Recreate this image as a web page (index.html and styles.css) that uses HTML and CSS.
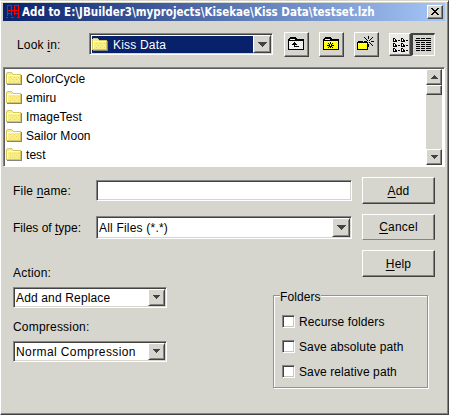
FILE: index.html
```
<!DOCTYPE html>
<html lang="en">
<head>
<meta charset="utf-8">
<title>Add to archive</title>
<link rel="stylesheet" href="styles.css">
</head>
<body>
<svg width="0" height="0" class="defs" aria-hidden="true">
  <defs>
    <symbol id="folder" viewBox="0 0 16 13">
      <path d="M0 2V1h1V0h5v1h1v1h8v10H0z" fill="#d6c663"/>
      <path d="M1 1h5v1h1v1h7v8H1z" fill="#f7ef84"/>
      <path d="M4 5h1v1H4zM8 5h1v1H8zM12 5h1v1h-1zM6 7h1v1H6zM10 7h1v1h-1zM4 9h1v1H4zM8 9h1v1H8zM12 9h1v1h-1z" fill="#efd66b"/>
      <path d="M1 3h13v1H2v7H1z" fill="#fffff0"/>
      <path d="M15 3h1v10H1v-1h14z" fill="#84847b"/>
    </symbol>
    <symbol id="tool-folder" viewBox="0 0 16 14">
      <path d="M0 13V2h1V1h1V0h6v1h1v1h7v11z"/>
      <path d="M1 4h14v8H1zM2 2h5v1H2z" fill="#ff0"/>
      <path d="M1 4.500h14M2 5.500h13M1 6.500h14M2 7.500h13M1 8.500h14M2 9.500h13M1 10.500h14M2 11.500h13M3 2.500h4" stroke="#fff" stroke-dasharray="1 1"/>
    </symbol>
    <symbol id="down" viewBox="0 0 9 5"><path d="M0 0h9v1h-1v1h-1v1h-1v1h-1v1h-1v-1h-1v-1h-1v-1h-1v-1h-1z" fill="#424242"/></symbol>
    <symbol id="down-small" viewBox="0 0 7 4"><path d="M0 0h7v1H6v1H5v1H4v1H3V3H2V2H1V1H0z" fill="#424242"/></symbol>
  </defs>
</svg>
<main class="window">
  <header class="titlebar">
    <svg class="app-icon" width="14" height="14" viewBox="0 0 14 14"><path d="M1.500 11V.5h4v5h-4M5.500 5.500h7M8.500 10V.5h4v11M1 8.500h4M5.500 6v5M8 8.500h4M0 12.500h2M5 12.500h3M11 12.500h3" fill="none" stroke="#f00"/></svg>
    <h1>Add to E:\JBuilder3\myprojects\Kisekae\Kiss Data\testset.lzh</h1>
    <button class="close" aria-label="Close"><svg width="8" height="7" viewBox="0 0 8 7"><path d="M0 0h2v1h1v1h2v-1h1v-1h2v1h-1v1h-1v1h-1v1h1v1h1v1h1v1h-2v-1h-1v-1h-2v1h-1v1h-2v-1h1v-1h1v-1h1v-1h-1v-1h-1v-1h-1z"/></svg></button>
  </header>

  <section class="lookbar">
    <span class="look-label">Look <u>i</u>n:</span>
    <div class="combo look">
      <div class="value selected"><svg class="folder" width="16" height="13"><use href="#folder"/></svg><span>Kiss Data</span></div>
      <button class="drop" aria-label="Open"><svg width="9" height="5"><use href="#down"/></svg></button>
    </div>
    <div class="tools">
      <button class="tool" aria-label="Up one level"><svg width="16" height="14" viewBox="0 0 16 14"><use href="#tool-folder"/><path d="M6 5h1v1h1v1h1v1H7v1h4v1H6V8H4V7h1V6h1z"/></svg></button>
      <button class="tool" aria-label="Home"><svg width="16" height="14" viewBox="0 0 16 14"><use href="#tool-folder"/><path d="M7 5h1v2h-1zM7 9h1v2h-1zM4 8h3v1h-3zM8 8h3v1h-3zM5 6h1v1h-1zM9 6h1v1h-1zM5 10h1v1h-1zM9 10h1v1h-1zM6 7h1v1h-1zM8 7h1v1h-1zM6 9h1v1h-1zM8 9h1v1h-1z"/></svg></button>
      <button class="tool burst" aria-label="New folder"><svg width="17" height="15" viewBox="0 0 17 15"><path d="M0 14V6h1V5h5v1h5v8z"/><path d="M1 7h9v6H1z" fill="#ff0"/><path d="M1 7.500h9M2 8.500h8M1 9.500h9M2 10.500h8M1 11.500h9M2 12.500h8" stroke="#fff" stroke-dasharray="1 1"/><path d="M11 0h1v3h-1zM11 8h1v3h-1zM7 1h1v1h-1zM8 2h1v1h-1zM9 3h1v1h-1zM10 4h1v1h-1zM15 1h1v1h-1zM14 2h1v1h-1zM13 3h1v1h-1zM12 4h1v1h-1zM14 5h3v1h-3zM7 5h3v1h-3zM12 6h1v1h-1zM13 7h1v1h-1zM14 8h1v1h-1zM15 9h1v1h-1z"/></svg></button>
    </div>
    <div class="views">
      <button class="view list" aria-label="List"><svg width="16" height="14" viewBox="0 0 16 14"><path d="M0 0h2v1h1v1h1v2H0zM8 0h2v1h1v1h1v2H8zM0 5h2v1h1v1h1v2H0zM8 5h2v1h1v1h1v2H8zM0 10h2v1h1v1h1v2H0zM8 10h2v1h1v1h1v2H8zM5 2h2v1H5zM13 2h2v1h-2zM5 7h2v1H5zM13 7h2v1h-2zM5 12h2v1H5zM13 12h2v1h-2z"/><path d="M1 1h1v2H1zM9 1h1v2H9zM1 6h1v2H1zM9 6h1v2H9zM1 11h1v2H1zM9 11h1v2H9z" fill="#fff"/></svg></button>
      <button class="view details" aria-label="Details"><svg width="16" height="13" viewBox="0 0 16 13"><path d="M0 2.500h16" stroke="#000"/><path d="M1 .5h15M1 4.500h15M1 6.500h15M1 8.500h15M1 10.500h15M1 12.500h15" stroke="#000" stroke-dasharray="4 1 4 1 5"/></svg></button>
    </div>
  </section>

  <section class="files">
    <ul>
      <li><svg class="folder" width="16" height="13"><use href="#folder"/></svg><span>ColorCycle</span></li>
      <li><svg class="folder" width="16" height="13"><use href="#folder"/></svg><span>emiru</span></li>
      <li><svg class="folder" width="16" height="13"><use href="#folder"/></svg><span>ImageTest</span></li>
      <li><svg class="folder" width="16" height="13"><use href="#folder"/></svg><span>Sailor Moon</span></li>
      <li><svg class="folder" width="16" height="13"><use href="#folder"/></svg><span>test</span></li>
    </ul>
    <div class="scrollbar">
      <button class="arrow" aria-label="Scroll up"><svg width="7" height="4" viewBox="0 0 7 4"><path d="M3 0h1v1h1v1h1v1h1v1H0V3h1V2h1V1h1z" fill="#424242"/></svg></button>
      <div class="thumb"></div>
      <button class="arrow last" aria-label="Scroll down"><svg width="7" height="4"><use href="#down-small"/></svg></button>
    </div>
  </section>

  <section class="fields">
    <div class="inputs">
      <div class="row"><label for="name">File <u>n</u>ame:</label><input id="name" type="text"></div>
      <div class="row type-row"><span class="label">Files of <u>t</u>ype:</span>
        <div class="combo type"><div class="value">All Files (*.*)</div><button class="drop" aria-label="Open"><svg width="9" height="5"><use href="#down"/></svg></button></div>
      </div>
    </div>
    <div class="actions">
      <button class="push"><span><u>A</u>dd</span></button>
      <button class="push cancel"><span><u>C</u>ancel</span></button>
      <button class="push"><span><u>H</u>elp</span></button>
    </div>
  </section>

  <section class="options">
    <div class="selects">
      <span class="label">Action:</span>
      <div class="combo small"><div class="value">Add and Replace</div><button class="drop" aria-label="Open"><svg width="7" height="4"><use href="#down-small"/></svg></button></div>
      <span class="label">Compression:</span>
      <div class="combo small"><div class="value wide">Normal Compression</div><button class="drop" aria-label="Open"><svg width="7" height="4"><use href="#down-small"/></svg></button></div>
    </div>
    <div class="group">
      <span class="legend">Folders</span>
      <label><input type="checkbox"><span>Recurse folders</span></label>
      <label><input type="checkbox"><span>Save absolute path</span></label>
      <label><input type="checkbox"><span>Save relative path</span></label>
    </div>
  </section>
</main>
</body>
</html>
```
FILE: styles.css
```
* { box-sizing: border-box; }
body { margin: 0; font: 12px/14px "Liberation Sans", Arial, sans-serif; color: #000; letter-spacing: .2px; }
.defs { position: absolute; }
svg { display: block; flex: none; shape-rendering: crispEdges; }
button, input { font: inherit; letter-spacing: inherit; margin: 0; padding: 0; border-radius: 0; color: inherit; }
u { text-decoration-thickness: 1px; text-underline-offset: 2px; text-decoration-skip-ink: none; }

.window {
  width: 449px; height: 415px; padding: 1px 2px 0 2px;
  background: #d6d6ce;
  border: 1px solid; border-color: #d6d6ce #424242 #424242 #fff;
  box-shadow: inset 0 1px #fff, inset -1px -1px #848484;
}
button {
  display: flex; align-items: center; justify-content: center;
  background: #d6d6ce;
  border: 1px solid; border-color: #fff #424242 #424242 #fff;
  box-shadow: inset -1px -1px #848484;
}

.titlebar {
  display: flex; align-items: center; width: 442px; height: 18px; margin-top: 1px; padding: 0 2px 0 3px;
  background: linear-gradient(90deg, #08216b, #a5c6f7);
  color: #fff;
}
h1 { flex: 1; margin: 0 0 0 2px; font: bold 11.5px/16px "DejaVu Sans Condensed", "DejaVu Sans", sans-serif; font-stretch: condensed; letter-spacing: 0; white-space: nowrap; }
.close { width: 16px; height: 14px; padding-bottom: 1px; }

.lookbar { display: flex; height: 46px; padding: 12px 0 0 14px; }
.look-label { width: 72px; padding-top: 5px; }
.combo {
  display: flex; background: #fff;
  border: 1px solid; border-color: #848484 #fff #fff #848484;
  box-shadow: inset 1px 1px #424242, inset -1px -1px #d6d6ce;
  padding: 2px 1px 1px 2px;
}
.value { flex: 1; display: flex; align-items: center; white-space: nowrap; }
.drop, .tool, .view, .arrow { align-items: flex-start; justify-content: flex-start; }
.drop { width: 18px; margin-top: -1px; padding: 6px 0 0 4px; box-shadow: inset 1px 1px #d6d6ce, inset -1px -1px #848484; }
.look { width: 184px; height: 22px; }
.selected { gap: 5px; background: #08216b; color: #fff; }
.tools { display: flex; gap: 10px; margin: -1px 0 0 11px; }
.tool { width: 25px; height: 25px; padding: 4px 0 0 3px; }
.burst { padding: 3px 0 0 2px; }
.views { display: flex; margin-left: 10px; height: 23px; }
.view { width: 22px; }
.list { padding: 4px 0 0 3px; background: #e9e9e5; box-shadow: inset -1px -1px #848484; }
.details { width: 24px; padding: 3px 0 0 2px; border-width: 2px 1px 1px 2px; border-color: #424242 #fff #fff #424242; box-shadow: none; }

.files {
  display: flex; width: 442px; height: 100px; padding: 1px;
  background: #fff;
  border: 1px solid; border-color: #848484 #fff #fff #848484;
  box-shadow: inset 1px 1px #5a5a5a;
}
.files ul { flex: 1; margin: 0; padding: 0 0 0 1px; list-style: none; }
.files li { display: flex; align-items: center; gap: 4px; height: 19px; }
.files li span { padding-top: 1px; letter-spacing: .05px; }
.scrollbar { display: flex; flex-direction: column; width: 16px; background: #d6d6ce; margin-right: 1px; }
.arrow { width: 16px; height: 16px; padding: 5px 0 0 4px; }
.last { margin-top: auto; }
.thumb { height: 10px; border: 1px solid; border-color: #fff #424242 #424242 #fff; box-shadow: inset -1px -1px #848484; }

.fields { display: flex; height: 99px; padding: 10px 0 0 10px; }
.inputs { width: 339px; padding-top: 3px; }
.row { display: flex; align-items: center; height: 21px; }
.row > label, .row > .label { width: 83px; }
.type-row { height: 23px; margin-top: 15px; }
.type-row > .label { letter-spacing: 0; }
.row input { width: 256px; height: 21px; background: #fff; border: 1px solid; border-color: #848484 #fff #fff #848484; box-shadow: inset 1px 1px #424242, inset -1px -1px #d6d6ce; }
.type { width: 256px; height: 23px; }
.actions { display: flex; flex-direction: column; gap: 10px; margin-left: 10px; }
.push { flex: none; width: 73px; height: 27px; }
.cancel { height: 26px; border-bottom-color: #848484; box-shadow: inset -1px 0 #848484; }

.options { display: flex; }
.selects { display: flex; flex-direction: column; width: 270px; padding-left: 10px; }
.small { width: 154px; height: 21px; margin: 7px 0 12px; letter-spacing: .15px; }
.small .drop { width: 17px; padding-top: 5px; }
.wide { letter-spacing: .4px; }
.group {
  width: 155px; height: 93px; margin-top: 29px; padding: 0 0 0 8px;
  display: flex; flex-direction: column; align-items: flex-start;
  border: 1px solid #94948c; box-shadow: inset 1px 1px #fff, 1px 1px #fff;
  letter-spacing: .1px;
}
.legend { margin: -6px 0 11px -2px; background: #d6d6ce; height: 14px; }
.group label { display: flex; align-items: center; gap: 4px; height: 13px; margin-bottom: 12px; }
.group input { appearance: none; width: 13px; height: 13px; background: #fff; border: 1px solid; border-color: #848484 #fff #fff #848484; box-shadow: inset 1px 1px #424242, inset -1px -1px #c6c6bd; }
```
